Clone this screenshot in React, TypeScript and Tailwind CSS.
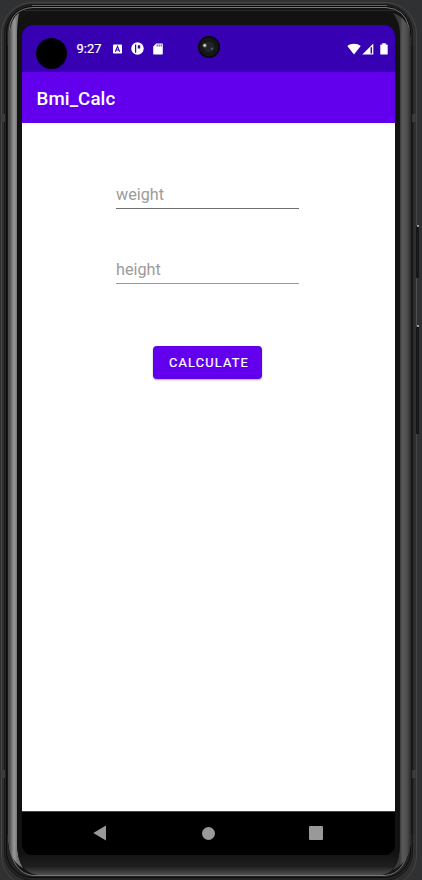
import React from "react";

function BackIcon() {
  return (
    <svg className="block" width="14" height="16" viewBox="0 0 14 16" fill="#999"><path d="M13 .6v14.8L.3 8z" /></svg>
  );
}

function StatusBar() {
  return (
    <div className="relative flex h-[47px] shrink-0 items-center bg-[#3700b3] text-white">
      <div className="ml-[14px] mt-[10px] h-[31px] w-[31px] rounded-full bg-black" />
      <span className="ml-[9.5px] w-[27.5px] whitespace-nowrap text-[12.8px] font-normal leading-4 tracking-[0.1px] [-webkit-text-stroke:0.22px_white]">9:27</span>
      <svg className="ml-[9px]" width="9" height="10" viewBox="0 0 9 10">
        <rect y=".5" width="9" height="9" rx=".8" fill="#fff" />
        <path d="M2.4 7.7 4.5 2.4l2.1 5.3M3.2 6h2.6" fill="none" stroke="#3700b3" strokeWidth="1.1" />
      </svg>
      <svg className="ml-[9px]" width="13" height="13" viewBox="0 0 13 13">
        <circle cx="6.5" cy="6.5" r="6.2" fill="#fff" />
        <path d="M4.6 2.6v8.2" fill="none" stroke="#3700b3" strokeWidth="1.2" />
        <path d="M6.8 3.2h2.4v3.3H6.8z" fill="#3700b3" />
      </svg>
      <svg className="ml-[9px]" width="10" height="12" viewBox="0 0 10 12">
        <path d="M3.2.5H9a.8.8 0 0 1 .8.8v9.4a.8.8 0 0 1-.8.8H1a.8.8 0 0 1-.8-.8V3.5z" fill="#fff" />
        <path d="M4.2 1.5v2M6.2 1.5v2M8.2 1.5v2" stroke="#3700b3" strokeWidth=".9" />
      </svg>
      <svg className="absolute left-[175px] top-[10px]" width="24" height="24" viewBox="0 0 24 24">
        <circle cx="12" cy="12" r="11" fill="#080909" />
        <circle cx="12" cy="12" r="9.5" fill="#151617" />
        <circle cx="12" cy="12" r="5.5" fill="#202426" />
        <circle cx="7.7" cy="10.4" r="2.2" fill="#5d625e" />
        <circle cx="7.7" cy="10.4" r="1.1" fill="#f1f3ed" />
        <circle cx="15" cy="13.8" r="1.3" fill="#345b80" />
      </svg>
      <div className="ml-auto mr-[7px] flex items-center">
        <svg width="14" height="12" viewBox="0 0 14 12"><path d="M.3 3.1C4.1-.1 9.9-.1 13.7 3.1L7 11.4z" fill="#fff" /></svg>
        <svg className="ml-px" width="12" height="12" viewBox="0 0 12 12">
          <path d="M11.3.5v11H.3z" fill="#fff" />
          <path d="M9.3 4.2v6.2" stroke="#3700b3" strokeWidth="1.5" />
        </svg>
        <svg className="ml-[6px]" width="8" height="12" viewBox="0 0 8 12"><path d="M2.2.3h3.6v1.2h1.4q.5 0 .5.5v9q0 .6-.5.6H.8q-.5 0-.5-.6V2q0-.5.5-.5h1.4z" fill="#fff" /></svg>
      </div>
    </div>
  );
}

function Field({ label, line }: { label: string; line: string }) {
  return (
    <div className={`ml-[94px] h-[26px] w-[183px] border-b ${line} text-[16.2px] leading-6 text-[#9b9b9b]`}>
      {label}
    </div>
  );
}

export default function App() {
  return (
    <div className="relative h-[880px] w-[422px] overflow-hidden bg-[#303133] font-['Roboto',sans-serif]">
      <PhoneFrame />
      <div className="relative ml-[22px] mt-[25px] flex h-[830px] w-[373px] flex-col overflow-hidden rounded-[11px] bg-black">
        <StatusBar />
        <header className="flex h-[51px] shrink-0 items-center bg-[#6200ee] pl-[14.5px] pt-[2px] text-[18.7px] font-medium leading-6 tracking-[0.1px] text-white">Bmi_Calc</header>
        <main className="flex flex-1 flex-col bg-white pt-[60px]">
          <Field label="weight" line="border-[#707070]" />
          <div className="h-[49px]" />
          <Field label="height" line="border-[#999]" />
          <button className="ml-[131px] mt-[62px] h-[33px] w-[109px] rounded-[4px] bg-[#6200ee] pl-[3px] text-[12.8px] font-normal tracking-[1.2px] text-white shadow-[0_1px_2px_#0005] [-webkit-text-stroke:0.22px_white]">CALCULATE</button>
        </main>
        <nav className="flex h-[44px] shrink-0 items-center border-t border-[#444] bg-black pb-px">
          <span className="ml-[71px]"><BackIcon /></span>
          <span className="ml-[95px] h-[13px] w-[13px] rounded-full bg-[#999]" />
          <span className="ml-[94px] h-[14px] w-[14px] rounded-[1px] bg-[#999]" />
        </nav>
      </div>
    </div>
  );
}

function PhoneFrame() {
  return (
    <svg className="absolute inset-0" width="422" height="880" viewBox="0 0 422 880">
      <defs>
        <linearGradient id="left" x1="9" x2="17" y1="0" y2="0" gradientUnits="userSpaceOnUse">
          <stop offset="0" stopColor="#444" /><stop offset=".35" stopColor="#777" />
          <stop offset=".65" stopColor="#999" /><stop offset="1" stopColor="#777" />
        </linearGradient>
        <linearGradient id="right" x1="400" x2="411" y1="0" y2="0" gradientUnits="userSpaceOnUse">
          <stop offset="0" stopColor="#3c3c3c" /><stop offset=".25" stopColor="#5a5a5a" />
          <stop offset=".65" stopColor="#4c4c4c" /><stop offset="1" stopColor="#292929" />
        </linearGradient>
        <linearGradient id="foot" x1="0" x2="0" y1="855" y2="876" gradientUnits="userSpaceOnUse">
          <stop offset="0" stopColor="#141414" /><stop offset=".55" stopColor="#1e1e1e" /><stop offset="1" stopColor="#555" />
        </linearGradient>
      </defs>
      <rect x="1" y="2" width="416" height="885" rx="32" fill="#303030" />
      <rect x="1.5" y="2.5" width="415" height="884" rx="31" fill="none" stroke="#454545" />
      <rect x="4.5" y="4.5" width="408" height="876" rx="28" fill="#242424" stroke="#181818" />
      <rect x="6.5" y="6.5" width="404" height="871" rx="26" fill="#242424" stroke="#0b0b0b" />
      <path d="M32 5.5h355" stroke="#606060" />
      <path d="M9 842V32Q10 9 33 7.5h353q19 1 23 20v814q-2 32-24 34H33Q12 873 9 842z" fill="#141414" stroke="#747474" />
      <path d="M9 35Q11 18 19 13q-2 9-2 24v805q0 17 6 26-12-6-14-24z" fill="url(#left)" />
      <path d="M400 35q0-14-7-22 16 5 18 25v806q-3 19-18 26 7-10 7-26z" fill="url(#right)" />
      <path d="M24 10.5h371" stroke="#292929" />
      <path d="M17 40q0-28 18-28h347q18 0 18 28v801q0 31-19 33H37q-20-1-20-32z" fill="#121212" />
      <path d="M18 855h381q-2 17-17 20H38q-16-2-20-20z" fill="url(#foot)" />
      <path d="M7.5 45v790M411.5 45v790" stroke="#171717" />
      <path d="M413.5 45v790" stroke="#292929" />
      <path d="M1 114h4v8H1zM1 770h4v8H1zM412 114h4v8h-4zM412 770h4v8h-4z" fill="#3b3b3b" />
      <path d="M417.5 226v52M417.5 327v107" stroke="#171717" strokeWidth="3" />
      <path d="M416.5 279v47" stroke="#505050" />
      <path d="M417 225h2v2h-2zM417 325h2v2h-2z" fill="#999" />
    </svg>
  );
}
